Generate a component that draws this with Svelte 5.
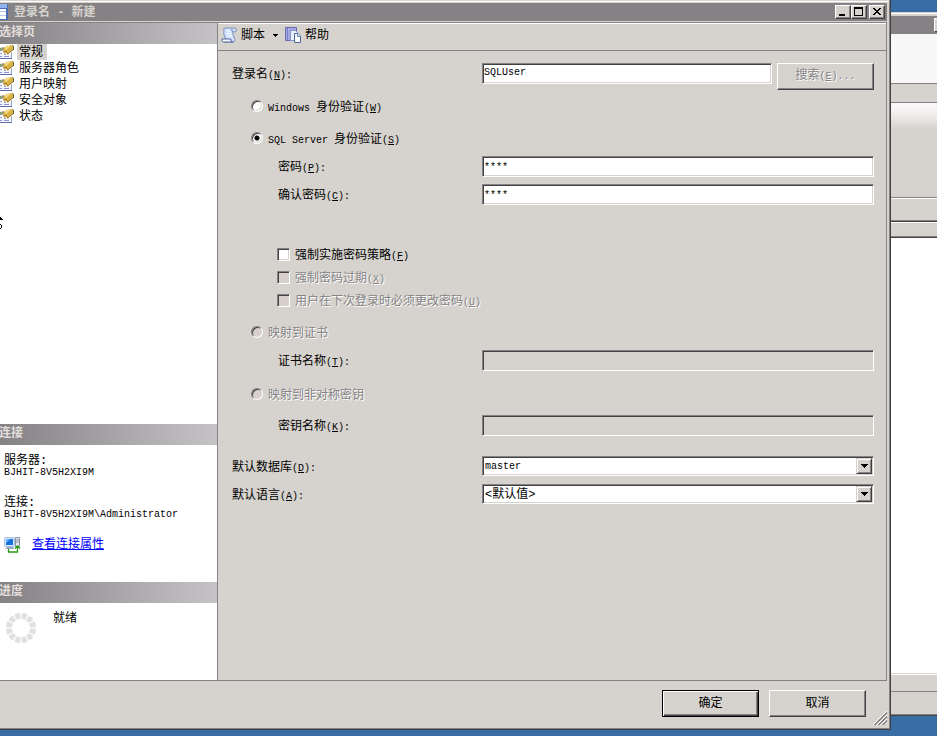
<script lang="ts">
    let pages = ['常规', '服务器角色', '用户映射', '安全对象', '状态'];
    let selected = '常规';
    let login = 'SQLUser';
    let password = '****';
    let confirmPassword = '****';
    let auth = 'sql';
    let enforcePolicy = false;
    let database = 'master';
    let language = '<默认值>';
    let segments = Array.from({ length: 12 }, (_, i) => i * 30 + 15);
</script>

<div class="desktop">
    <div class="dialog">
        <header class="titlebar">
            <svg class="app-icon" width="8" height="16" viewBox="0 0 8 16" shape-rendering="crispEdges">
                <rect width="8" height="16" fill="#4a6cb4" />
                <rect width="7" height="4" fill="#8fb4ee" />
                <rect y="5" width="6" height="10" fill="#fff" />
                <path d="M0 7h6M0 11h6" stroke="#b4c8ec" />
            </svg>
            <h1>登录名 - 新建</h1>
            <div class="caption">
                <button aria-label="最小化"><svg width="10" height="9" viewBox="0 0 10 9" shape-rendering="crispEdges"><path d="M1 7h6v2H1z" /></svg></button>
                <button aria-label="最大化"><svg width="10" height="9" viewBox="0 0 10 9" shape-rendering="crispEdges"><path d="M0 0h9v9H0zM1 2v6h7V2z" fill-rule="evenodd" /></svg></button>
                <button class="close" aria-label="关闭"><svg width="10" height="9" viewBox="0 0 10 9" shape-rendering="crispEdges"><path d="M1 1h2v1h1v1h2V2h1V1h2v1H8v1H7v1H6v1h1v1h1v1h1v1H7V7H6V6H4v1H3v1H1V7h1V6h1V5h1V4H3V3H2V2H1z" /></svg></button>
            </div>
        </header>

        <div class="body">
            <aside>
                <h2>选择页</h2>
                <nav>
                    {#each pages as page}
                        <button class="page" class:selected={page === selected} on:click={() => (selected = page)}>
                            <svg width="15" height="16" viewBox="0 0 15 16">
                                <path d="M0 5h11v9H0z" fill="#f6f7ff" />
                                <path d="M0 5.500h4M11.500 8v6" stroke="#9aa4c8" />
                                <path d="M0 14.500h12" stroke="#5f6da6" />
                                <path d="M0 9.500h2M0 12.500h2M4 12.500h5M4 10.500h2" stroke="#8f93d8" />
                                <path d="M0 4l4-1v2L2 7H0z" fill="#8a9c78" />
                                <path d="M12 1l2 1v4l-2 1z" fill="#4f7440" />
                                <path d="M3 6l2-3 2-1 4-1 2 1v4l-2 2-2 1-1 2-2-2-2 1z" fill="#dcb145" />
                                <path d="M5 4l3-2h3L8 4 6 6z" fill="#f8e38c" />
                                <path d="M3 7l2 1 1-1 2 3 2-2 2-2" fill="none" stroke="#8c6d24" stroke-width=".8" />
                            </svg>
                            <span>{page}</span>
                        </button>
                    {/each}
                    <svg class="pointer" width="4" height="14" viewBox="0 0 4 14" shape-rendering="crispEdges">
                        <path d="M0 1h1v1h1v1h1v1H0zM0 8h1v1h1v3H1v1H0v-1h1V9H0z" />
                    </svg>
                </nav>

                <h2>连接</h2>
                <section class="connection">
                    <dl>
                        <dt>服务器:</dt>
                        <dd class="latin">BJHIT-8V5H2XI9M</dd>
                        <dt>连接:</dt>
                        <dd class="latin">BJHIT-8V5H2XI9M\Administrator</dd>
                    </dl>
                    <div class="link-row">
                        <svg width="17" height="17" viewBox="0 0 17 17">
                            <rect x=".5" y="1.500" width="10" height="9" rx="1" fill="#d7e5fa" stroke="#a9c0e2" />
                            <rect x="2" y="3" width="7" height="6" fill="#1473dd" />
                            <path d="M2 3h4L2 7z" fill="#67b4ff" />
                            <path d="M3 11h6l1 2H1z" fill="#9aa7c2" />
                            <path d="M11.500 1.500h4v9h-4z" fill="#e6e9f2" stroke="#8b93a8" />
                            <path d="M12 4h3M12 6h3" stroke="#8b93a8" />
                            <path d="M4.500 13v3h9v-5M11 12.500l2.500-2.500 2.500 2.500" fill="none" stroke="#279a14" stroke-width="1.300" />
                        </svg>
                        <a href="#connection">查看连接属性</a>
                    </div>
                </section>

                <h2>进度</h2>
                <section class="progress">
                    <svg width="32" height="32" viewBox="-16 -16 32 32">
                        {#each segments as angle}
                            <path d="M-3-14.500Q0-16 3-14.500L2-9H-2z" fill="#e1dfe2" transform="rotate({angle})" />
                        {/each}
                    </svg>
                    <span>就绪</span>
                </section>
            </aside>

            <main>
                <div class="toolbar">
                    <button>
                        <svg width="17" height="17" viewBox="0 0 17 17">
                            <path d="M4 1h9q2.500 0 2.500 2t-2.500 2h-1q-1 2 1 5t0 5H3q3-2 1-5T3 4q-1-3 1-3z" fill="#d3e3fd" stroke="#7c90bc" />
                            <path d="M1 12h9q-1 3 2 3H2q-2-1-1-3z" fill="#f4f8ff" stroke="#526a9d" />
                            <path d="M12 5q-2-1-1-3" fill="none" stroke="#6078a8" />
                            <path d="M6 4h3M6 6.500h4M7 9h4" stroke="#fff" />
                        </svg>
                        <span>脚本</span>
                        <svg class="drop" width="5" height="3" viewBox="0 0 5 3" shape-rendering="crispEdges"><path d="M0 0h5v1H4v1H3v1H2V2H1V1H0z" /></svg>
                    </button>
                    <button>
                        <svg width="17" height="17" viewBox="0 0 17 17">
                            <path d="M.5.5h11v13H.5z" fill="#a6a9e2" stroke="#6669b4" />
                            <path d="M2.500 1v12" stroke="#7a7dc6" />
                            <path d="M5.500 3.500h5l2 2v8h-7z" fill="#e9f0ff" stroke="#7d95c4" />
                            <path d="M9.500 6.500h3.500l2.500 2.500v6.500h-6z" fill="#fff" stroke="#486699" />
                            <path d="M12.500 6.500V9.500h3" fill="#cfdcf6" stroke="#6f8bc0" />
                        </svg>
                        <span>帮助</span>
                    </button>
                </div>

                <form on:submit|preventDefault>
                    <div class="row login">
                        <label for="login">登录名<span class="latin">(<u>N</u>):</span></label>
                        <input id="login" class="text" type="text" bind:value={login} />
                        <button type="button" class="push" disabled>搜索<span class="latin">(<u>E</u>)...</span></button>
                    </div>
                    <label class="option windows">
                        <input type="radio" bind:group={auth} value="windows" />
                        <span><span class="latin">Windows&nbsp;</span>身份验证<span class="latin">(<u>W</u>)</span></span>
                    </label>
                    <label class="option sql">
                        <input type="radio" bind:group={auth} value="sql" />
                        <span><span class="latin">SQL Server&nbsp;</span>身份验证<span class="latin">(<u>S</u>)</span></span>
                    </label>
                    <div class="row nested">
                        <label for="password">密码<span class="latin">(<u>P</u>):</span></label>
                        <input id="password" class="text" type="text" bind:value={password} />
                    </div>
                    <div class="row nested confirm">
                        <label for="confirm">确认密码<span class="latin">(<u>C</u>):</span></label>
                        <input id="confirm" class="text" type="text" bind:value={confirmPassword} />
                    </div>

                    <div class="checks">
                        <label class="option">
                            <input type="checkbox" bind:checked={enforcePolicy} />
                            <span>强制实施密码策略<span class="latin">(<u>F</u>)</span></span>
                        </label>
                        <label class="option disabled">
                            <input type="checkbox" disabled />
                            <span>强制密码过期<span class="latin">(<u>X</u>)</span></span>
                        </label>
                        <label class="option disabled">
                            <input type="checkbox" disabled />
                            <span>用户在下次登录时必须更改密码<span class="latin">(<u>U</u>)</span></span>
                        </label>
                    </div>

                    <label class="option disabled mapped">
                        <input type="radio" bind:group={auth} value="certificate" disabled />
                        <span>映射到证书</span>
                    </label>
                    <div class="row nested">
                        <label for="certificate">证书名称<span class="latin">(<u>T</u>):</span></label>
                        <input id="certificate" class="text" type="text" disabled />
                    </div>
                    <label class="option disabled mapped">
                        <input type="radio" bind:group={auth} value="key" disabled />
                        <span>映射到非对称密钥</span>
                    </label>
                    <div class="row nested key">
                        <label for="key">密钥名称<span class="latin">(<u>K</u>):</span></label>
                        <input id="key" class="text" type="text" disabled />
                    </div>

                    <div class="row database">
                        <label for="database">默认数据库<span class="latin">(<u>D</u>):</span></label>
                        <div class="combo">
                            <select id="database" class="latin" bind:value={database}>
                                <option>master</option>
                            </select>
                            <span class="arrow"><svg width="7" height="4" viewBox="0 0 7 4" shape-rendering="crispEdges"><path d="M0 0h7v1H6v1H5v1H4v1H3V3H2V2H1V1H0z" /></svg></span>
                        </div>
                    </div>
                    <div class="row language">
                        <label for="language">默认语言<span class="latin">(<u>A</u>):</span></label>
                        <div class="combo">
                            <select id="language" bind:value={language}>
                                <option>&lt;默认值&gt;</option>
                            </select>
                            <span class="arrow"><svg width="7" height="4" viewBox="0 0 7 4" shape-rendering="crispEdges"><path d="M0 0h7v1H6v1H5v1H4v1H3V3H2V2H1V1H0z" /></svg></span>
                        </div>
                    </div>
                </form>
            </main>
        </div>

        <footer>
            <button class="push default">确定</button>
            <button class="push">取消</button>
            <svg class="grip" width="14" height="14" viewBox="0 0 14 14">
                <path d="M0 14L14 0M4 14L14 4M8 14L14 8" stroke="#fff" />
                <path d="M1 14L14 1M2 14L14 2M5 14L14 5M6 14L14 6M9 14L14 9M10 14L14 10" stroke="#848284" />
            </svg>
        </footer>
    </div>

    <div class="behind">
        <div class="behind-title"><span></span></div>
        <div class="behind-menu"></div>
        <div class="behind-tools"></div>
        <div class="behind-fade"></div>
        <div class="behind-bar"></div>
        <div class="behind-bar small"></div>
        <div class="behind-page"></div>
        <div class="behind-status"></div>
        <div class="behind-end"></div>
    </div>
</div>

<style>
:global(body) {
    margin: 0;
    background: #396da5;
}
.desktop, .desktop * {
    box-sizing: border-box;
}
.desktop {
    display: grid;
    grid-template-columns: 1fr 46px;
    min-height: 100vh;
    overflow: hidden;
    background: #396da5;
    color: #000;
    font-family: "Liberation Mono", "Noto Sans CJK SC", monospace;
    font-size: 12px;
    line-height: 16px;
}
button, input, select {
    margin: 0;
    font: inherit;
    color: inherit;
}
.latin {
    font-size: 10px;
}
u {
    text-underline-offset: 1px;
}

.dialog {
    display: flex;
    flex-direction: column;
    margin-bottom: 6px;
    background: #d6d3ce;
    border-right: 1px solid #424142;
    border-bottom: 1px solid #424142;
    box-shadow: inset -1px -1px #848284, inset 0 1px #d6d3ce, inset 0 2px #fff;
    padding: 3px 3px 1px 0;
}
.titlebar {
    display: flex;
    align-items: center;
    height: 18px;
    background: #848284;
    color: #d6d3ce;
}
.app-icon {
    margin-right: 6px;
}
h1 {
    flex: 1;
    margin: 0;
    padding-top: 2px;
    font-size: 12px;
    line-height: 18px;
}
.caption {
    display: flex;
    padding-right: 2px;
}
.caption button {
    display: flex;
    align-items: center;
    justify-content: center;
    width: 16px;
    height: 14px;
    padding: 0 1px 1px 0;
    border: 1px solid;
    border-color: #fff #424142 #424142 #fff;
    background: #d6d3ce;
    box-shadow: inset -1px -1px #848284;
}
.caption .close {
    margin-left: 2px;
}

.body {
    display: flex;
    flex: 1;
    margin-top: 1px;
    border-top: 1px solid #848284;
    border-bottom: 1px solid #848284;
}
aside {
    display: flex;
    flex-direction: column;
    width: 217px;
    flex: none;
    background: #fff;
}
h2 {
    height: 21px;
    margin: 0;
    background: linear-gradient(90deg, #848284, #c6c3c6);
    color: #e4dfdc;
    font-size: 12px;
    line-height: 20px;
    text-indent: -1px;
}
nav {
    position: relative;
    flex: 1;
    display: flex;
    flex-direction: column;
    align-items: flex-start;
}
.page {
    display: flex;
    gap: 2px;
    height: 16px;
    padding: 0;
    border: 0;
    background: none;
}
.page span {
    height: 16px;
    padding: 0 4px 0 2px;
    line-height: 18px;
}
.page.selected span {
    background: #d6d3ce;
}
.pointer {
    position: absolute;
    left: 0;
    top: 172px;
}
.connection {
    height: 137px;
    padding: 9px 4px;
}
dl {
    margin: 0;
}
dt {
    line-height: 14px;
}
dd {
    margin: 0 0 18px;
    line-height: 10px;
}
.link-row {
    display: flex;
    align-items: center;
    gap: 11px;
    margin-top: -2px;
}
a {
    color: #00f;
}
.progress {
    display: flex;
    align-items: flex-start;
    gap: 16px;
    height: 77px;
    padding: 8px 5px;
}
.progress svg {
    margin-top: 1px;
}

main {
    flex: 1;
    min-width: 0;
    border-left: 1px solid #848284;
    border-right: 1px solid #848284;
}
.toolbar {
    display: flex;
    height: 28px;
    gap: 7px;
    padding-left: 3px;
    border-top: 1px solid #fff;
    border-bottom: 1px solid #848284;
}
.toolbar button {
    display: flex;
    align-items: center;
    gap: 3px;
    padding: 0 0 3px;
    border: 0;
    background: none;
}
.drop {
    margin: 0 0 0 5px;
}

form {
    padding: 12px 12px 12px 14px;
}
.row {
    display: flex;
    align-items: flex-start;
    height: 21px;
    margin-top: 9px;
}
.row > label {
    flex: none;
    width: 250px;
    padding-top: 3px;
    line-height: 18px;
}
.nested > label {
    padding-left: 46px;
}
.row.login {
    height: 27px;
    margin-top: 0;
}
.row.confirm {
    margin-top: 7px;
}
.row.key {
    margin-top: 12px;
}
.text {
    flex: 1;
    min-width: 0;
    height: 21px;
    padding: 0 1px 2px;
    border: 1px solid;
    border-color: #848284 #fff #fff #848284;
    border-radius: 0;
    background: #fff;
    box-shadow: inset 1px 1px #424142, inset -1px -1px #d6d3ce;
    font-size: 10px;
    outline: 0;
}
.nested .text {
    padding: 1px 1px 0;
}
.text:disabled {
    background: #d6d3ce;
}
.login .push {
    margin-left: 5px;
}
.push {
    width: 97px;
    height: 27px;
    padding: 0;
    border: 1px solid;
    border-color: #fff #424142 #424142 #fff;
    background: #d6d3ce;
    box-shadow: inset -1px -1px #848284;
}
.push:disabled, .disabled {
    color: #848284;
    text-shadow: 1px 1px #fff;
}
.push.default {
    border-color: #000;
    box-shadow: inset 1px 1px #fff, inset -1px -1px #424142, inset -2px -2px #848284;
}

.option {
    display: flex;
    align-items: center;
    gap: 5px;
    width: fit-content;
    height: 16px;
    margin-left: 19px;
}
.option > span {
    padding-top: 2px;
}
.windows {
    margin-top: 9px;
}
.sql {
    margin-top: 16px;
}
.option input {
    appearance: none;
    width: 12px;
    height: 12px;
    margin-bottom: 2px;
    border: 1px solid;
    border-color: #848284 #fff #fff #848284;
    background: #fff;
    box-shadow: inset 1px 1px #424142, inset -1px -1px #d6d3ce;
}
.option input[type="radio"] {
    border-radius: 50%;
}
.option input[type="radio"]:checked {
    background: radial-gradient(circle, #000 2px, #fff 3px);
}
.option input[type="checkbox"] {
    width: 13px;
    height: 13px;
}
.option input[type="checkbox"]:checked {
    background: linear-gradient(#000, #000) center / 5px 5px no-repeat #fff;
}
.option input:disabled {
    background: #d9d0ce;
}
.checks {
    display: flex;
    flex-direction: column;
    gap: 7px;
    margin: 42px 0 15px 26px;
}
.mapped {
    margin-top: 16px;
}

.row.database {
    margin-top: 20px;
}
.row.language {
    margin-top: 7px;
}
.combo {
    position: relative;
    flex: 1;
}
.combo select {
    display: block;
    appearance: none;
    width: 100%;
    height: 20px;
    padding: 1px 18px 0 2px;
    border: 1px solid;
    border-color: #848284 #fff #fff #848284;
    border-radius: 0;
    background: #fff;
    box-shadow: inset 1px 1px #424142, inset -1px -1px #d6d3ce;
    outline: 0;
}
.arrow {
    position: absolute;
    top: 2px;
    right: 2px;
    display: flex;
    align-items: center;
    justify-content: center;
    width: 16px;
    height: 16px;
    border: 1px solid;
    border-color: #d6d3ce #424142 #424142 #d6d3ce;
    background: #d6d3ce;
    box-shadow: inset 1px 1px #fff, inset -1px -1px #848284;
    pointer-events: none;
}

footer {
    position: relative;
    display: flex;
    justify-content: flex-end;
    gap: 10px;
    height: 47px;
    padding: 9px 21px 0 0;
}
.grip {
    position: absolute;
    right: 0;
    bottom: 3px;
}

.behind {
    display: flex;
    flex-direction: column;
    margin: 12px 0 20px;
    background: #d6d3ce;
    border-bottom: 1px solid #424142;
    box-shadow: inset 0 -1px #848284, inset 0 1px #d6d3ce, inset 0 2px #fff;
    padding-top: 4px;
}
.behind-title {
    display: flex;
    justify-content: flex-end;
    height: 18px;
    padding-top: 2px;
    background: #848284;
}
.behind-title span {
    width: 3px;
    height: 14px;
    background: #d6d3ce;
    border-left: 1px solid #fff;
    border-top: 1px solid #fff;
    border-bottom: 1px solid #424142;
}
.behind-menu {
    height: 50px;
    background: #f7f7f7;
    border-bottom: 1px solid #848284;
}
.behind-tools {
    height: 19px;
    border-bottom: 1px solid #848284;
}
.behind-fade {
    height: 95px;
    border-bottom: 1px solid #848284;
    background: linear-gradient(#fbf8fb, #efedeb 12px, #d6d3ce 26px);
}
.behind-bar {
    height: 24px;
    border-top: 1px solid #fff;
    border-bottom: 1px solid #424142;
    box-shadow: inset 0 -1px #848284;
}
.behind-bar.small {
    height: 16px;
}
.behind-page {
    flex: 1;
    background: #fff;
}
.behind-status {
    height: 19px;
    border-top: 1px solid #d6d3ce;
    border-bottom: 1px solid #848284;
    box-shadow: inset 0 1px #fff;
}
.behind-end {
    height: 23px;
}
</style>
